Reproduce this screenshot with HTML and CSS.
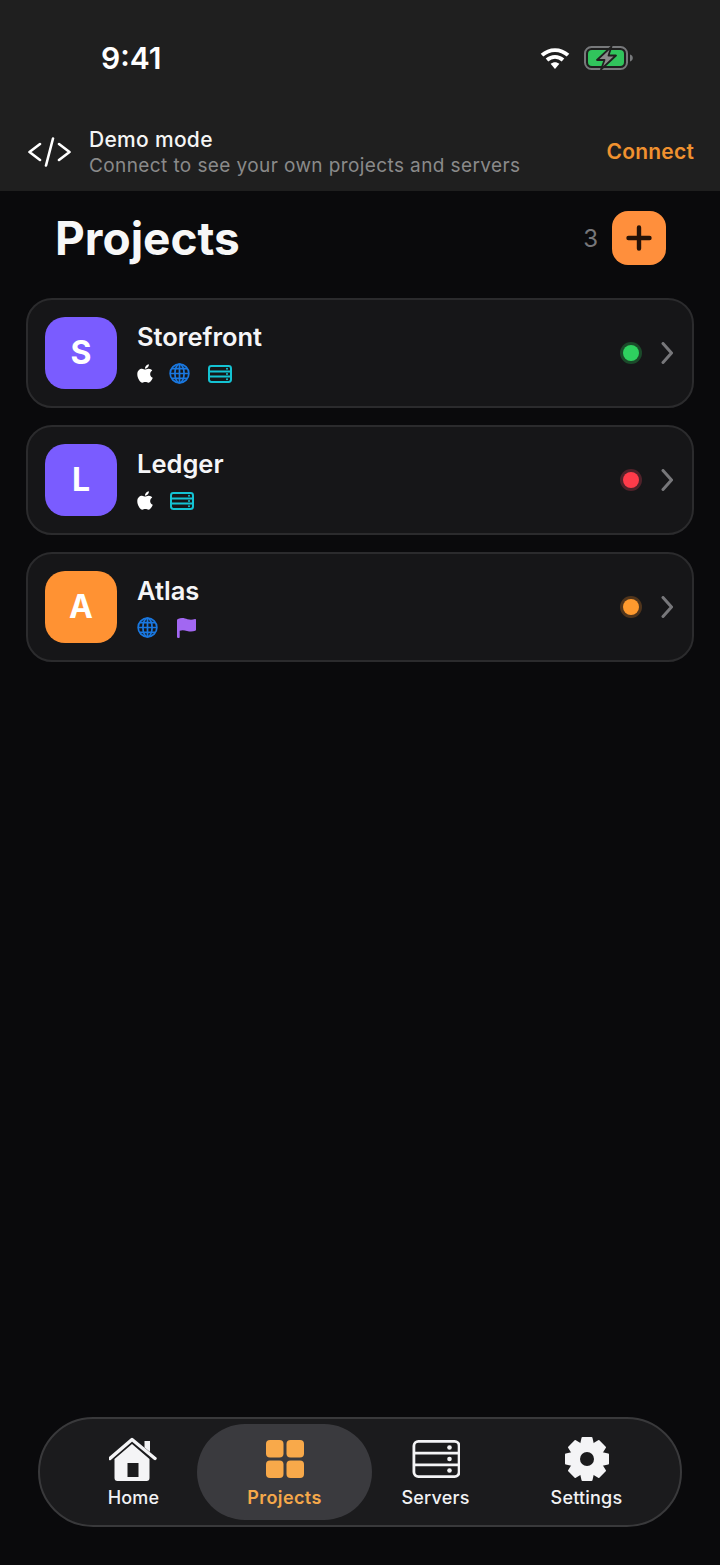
FILE: index.html
```html
<!DOCTYPE html>
<html lang="en">
<head>
    <meta charset="UTF-8">
    <meta name="viewport" content="width=device-width, initial-scale=1.0">
    <title>Projects</title>
    <link rel="stylesheet" href="styles.css">
</head>
<body>
    <svg class="defs" width="0" height="0" aria-hidden="true">
        <symbol id="i-apple" viewBox="0 0 384 512">
            <path fill="currentColor" d="M318.7 268.7c-.2-36.7 16.4-64.4 50-84.8-18.8-26.9-47.2-41.7-84.7-44.6-35.5-2.8-74.3 20.7-88.5 20.7-15 0-49.4-19.7-76.4-19.7C63.3 141.2 4 184.8 4 273.5q0 39.3 14.4 81.2c12.8 36.7 59 126.7 107.2 125.2 25.2-.6 43-17.9 75.8-17.9 31.8 0 48.3 17.9 76.4 17.9 48.6-.7 90.4-82.5 102.6-119.3-65.2-30.7-61.7-90-61.7-91.9zm-56.6-164.2c27.3-32.4 24.8-61.9 24-72.5-24.1 1.4-52 16.4-67.9 34.9-17.5 19.8-27.8 44.3-25.6 71.9 26.1 2 49.9-11.4 69.5-34.3z"/>
        </symbol>
        <symbol id="i-globe" viewBox="0 0 22 22">
            <g fill="none" stroke="currentColor" stroke-width="1.8">
                <circle cx="11" cy="11" r="9.8"/>
                <ellipse cx="11" cy="11" rx="4.8" ry="9.8"/>
                <path d="M11 1.200v19.600M1.200 11h19.600M2.800 6h16.400M2.800 16h16.400"/>
            </g>
        </symbol>
        <symbol id="i-server" viewBox="0 0 24 18">
            <g fill="none" stroke="currentColor" stroke-width="2">
                <rect x="1" y="1" width="22" height="16" rx="2.400"/>
                <path d="M1 6.500h22M1 11.500h22"/>
            </g>
            <g fill="currentColor">
                <circle cx="19" cy="3.800" r="1"/>
                <circle cx="19" cy="9" r="1"/>
                <circle cx="19" cy="14.200" r="1"/>
            </g>
        </symbol>
        <symbol id="i-flag" viewBox="0 0 19 20">
            <path fill="currentColor" d="M0 2.200C0 1.600.3 1.300.9 1 5-.9 8 .5 10.500 1.200c2.500.7 5 .7 7.500-.2.600-.2 1 .1 1 .7v10c0 .5-.2.800-.7 1-2.800 1.100-5.500 1-8.300.2-2.500-.7-4.700-1.200-7.300-.2V19c0 .6-.4 1-1.100 1S0 19.600 0 19z"/>
        </symbol>
    </svg>

    <div class="screen">
        <header class="top">
            <div class="status">
                <span class="time">9:41</span>
                <div class="status-icons">
                    <svg class="wifi" width="30" height="24" viewBox="0 0 30 24">
                        <g fill="none" stroke="#fff" stroke-width="3.800">
                            <path d="M2 9.200C9.500 2.300 20.500 2.300 28 9.200"/>
                            <path d="M7 14c4.700-4.200 11.300-4.200 16 0"/>
                        </g>
                        <path fill="#fff" d="M10.600 17.800c2.700-2.200 6.100-2.200 8.800 0L15 23z"/>
                    </svg>
                    <svg class="battery" width="50" height="24" viewBox="0 0 50 24">
                        <rect x="1" y="1" width="42" height="22" rx="6.500" fill="none" stroke="#77797b" stroke-width="2"/>
                        <rect x="4" y="4" width="36" height="16" rx="4" fill="#31c45c"/>
                        <path d="M46 8.500c1.800.6 2.800 1.900 2.800 3.500s-1 2.900-2.800 3.500z" fill="#77797b"/>
                        <path d="M27.500 .5 13 14h7.500l-3.500 9.500L32 9.500h-7.500z" fill="#8b8b8b" stroke="#1f1f1f" stroke-width="1.800" stroke-linejoin="round"/>
                    </svg>
                </div>
            </div>
            <div class="banner">
                <svg class="code-icon" width="43" height="30" viewBox="0 0 43 30">
                    <path fill="none" stroke="#fff" stroke-width="2.600" stroke-linecap="round" stroke-linejoin="round" d="M12 7 1.500 15 12 23M31 7l10.500 8L31 23M25 1.500 18 28.500"/>
                </svg>
                <div class="banner-text">
                    <div class="banner-title">Demo mode</div>
                    <div class="banner-sub">Connect to see your own projects and servers</div>
                </div>
                <a class="connect">Connect</a>
            </div>
        </header>

        <main class="content">
            <div class="title-row">
                <h1>Projects</h1>
                <span class="count">3</span>
                <button class="add-btn" type="button">
                    <svg width="28" height="28" viewBox="0 0 28 28">
                        <path fill="none" stroke="#241208" stroke-width="4.400" stroke-linecap="round" d="M14 3.500v21M3.500 14h21"/>
                    </svg>
                </button>
            </div>

            <div class="card">
                <div class="avatar purple">S</div>
                <div class="card-body">
                    <div class="card-name">Storefront</div>
                    <div class="card-icons">
                        <svg class="ic ic-apple"><use href="#i-apple"/></svg>
                        <svg class="ic ic-globe"><use href="#i-globe"/></svg>
                        <svg class="ic ic-server"><use href="#i-server"/></svg>
                    </div>
                </div>
                <span class="dot green"></span>
                <svg class="chevron" width="12" height="22" viewBox="0 0 12 22"><path d="M2 1.500 10.500 11 2 20.500"/></svg>
            </div>

            <div class="card">
                <div class="avatar purple">L</div>
                <div class="card-body">
                    <div class="card-name">Ledger</div>
                    <div class="card-icons">
                        <svg class="ic ic-apple"><use href="#i-apple"/></svg>
                        <svg class="ic ic-server"><use href="#i-server"/></svg>
                    </div>
                </div>
                <span class="dot red"></span>
                <svg class="chevron" width="12" height="22" viewBox="0 0 12 22"><path d="M2 1.500 10.500 11 2 20.500"/></svg>
            </div>

            <div class="card">
                <div class="avatar orange">A</div>
                <div class="card-body">
                    <div class="card-name">Atlas</div>
                    <div class="card-icons">
                        <svg class="ic ic-globe"><use href="#i-globe"/></svg>
                        <svg class="ic ic-flag"><use href="#i-flag"/></svg>
                    </div>
                </div>
                <span class="dot amber"></span>
                <svg class="chevron" width="12" height="22" viewBox="0 0 12 22"><path d="M2 1.500 10.500 11 2 20.500"/></svg>
            </div>
        </main>

        <nav class="tabbar">
            <a class="tab">
                <svg class="tab-icon" width="50" height="44" viewBox="1.500 0 50 44">
                    <path fill="none" stroke="#f4f4f6" stroke-width="3.400" stroke-linecap="round" stroke-linejoin="round" d="M2.500 21.500 24.500 2.500l23 19"/>
                    <path fill="#f4f4f6" d="M37 4h5.500v11L37 10.500z"/>
                    <path fill="#f4f4f6" fill-rule="evenodd" d="M24.500 7 42 22V41c0 1.700-1 3-3 3H10c-2 0-3-1.300-3-3V22zM20 26v14h11V26z"/>
                </svg>
                <span>Home</span>
            </a>
            <a class="tab active">
                <svg class="tab-icon" width="38" height="44" viewBox="0 0 38 44">
                    <g fill="#f8a94a">
                        <rect x="0" y="3" width="17.500" height="17.500" rx="4"/>
                        <rect x="20.500" y="3" width="17.500" height="17.500" rx="4"/>
                        <rect x="0" y="23.500" width="17.500" height="17.500" rx="4"/>
                        <rect x="20.500" y="23.500" width="17.500" height="17.500" rx="4"/>
                    </g>
                </svg>
                <span>Projects</span>
            </a>
            <a class="tab">
                <svg class="tab-icon" width="48" height="44" viewBox="-.5 0 48 44">
                    <g fill="none" stroke="#f4f4f6" stroke-width="2.800">
                        <rect x="1.400" y="4.400" width="45.200" height="35.200" rx="4.500"/>
                        <path d="M1.400 16.200h45.200M1.400 27.800h45.200"/>
                    </g>
                    <g fill="#f4f4f6">
                        <circle cx="37" cy="10.500" r="2.300"/>
                        <circle cx="37" cy="22" r="2.300"/>
                        <circle cx="37" cy="33.500" r="2.300"/>
                    </g>
                </svg>
                <span>Servers</span>
            </a>
            <a class="tab">
                <svg class="tab-icon" width="44" height="44" viewBox="0 0 44 44">
                    <g fill="#f4f4f6" stroke="#f4f4f6" stroke-width="2" stroke-linejoin="round">
                        <path d="M17.500 1h9l2 9h-13z"/>
                        <path d="M17.500 1h9l2 9h-13z" transform="rotate(45 22 22)"/>
                        <path d="M17.500 1h9l2 9h-13z" transform="rotate(90 22 22)"/>
                        <path d="M17.500 1h9l2 9h-13z" transform="rotate(135 22 22)"/>
                        <path d="M17.500 1h9l2 9h-13z" transform="rotate(180 22 22)"/>
                        <path d="M17.500 1h9l2 9h-13z" transform="rotate(225 22 22)"/>
                        <path d="M17.500 1h9l2 9h-13z" transform="rotate(270 22 22)"/>
                        <path d="M17.500 1h9l2 9h-13z" transform="rotate(315 22 22)"/>
                        <circle cx="22" cy="22" r="15.500"/>
                    </g>
                    <circle cx="22" cy="22" r="7" fill="#1b1b1d"/>
                </svg>
                <span>Settings</span>
            </a>
        </nav>
    </div>
</body>
</html>
```

FILE: styles.css
```css
* { box-sizing: border-box; }
html, body { margin: 0; height: 100%; overflow: hidden; }
body { background-color: #0a0a0c; color: #f5f5f7; font-family: Inter, "Noto Sans", sans-serif; }
.defs { position: absolute; }
.screen { height: 1565px; display: flex; flex-direction: column; }

.top { background-color: #1f1f1f; height: 191px; }
.status { height: 116px; display: flex; align-items: center; justify-content: space-between; padding: 0 86px 0 101px; }
.time { font-size: 30px; font-weight: 600; color: #fff; }
.status-icons { display: flex; align-items: center; gap: 14px; }
.status-icons svg { display: block; }
.banner { display: flex; align-items: center; height: 75px; padding: 0 26px 2px 28px; }
.code-icon { flex: none; margin: 0 18px 2px 0; }
.banner-text { flex: 1; }
.banner-title { font-size: 21px; font-weight: 500; line-height: 26px; letter-spacing: 0.3px; color: #f5f5f5; }
.banner-sub { font-size: 19px; line-height: 26px; letter-spacing: 0.4px; color: #8a8a8a; }
.connect { font-size: 21px; font-weight: 600; letter-spacing: 0.2px; padding-bottom: 2px; color: #f0912f; }

.content { padding: 0 26px; }
.title-row { display: flex; align-items: center; padding: 20px 28px 33px 29px; }
h1 { flex: 1; margin: 0; font-size: 46px; font-weight: 700; line-height: 54px; color: #f7f7f7; }
.count { font-size: 24px; color: #77777a; margin-right: 14px; }
.add-btn { width: 54px; height: 54px; border: none; border-radius: 16px; padding: 0; background-color: #ff8f3c; display: flex; align-items: center; justify-content: center; }

.card { display: flex; align-items: center; height: 110px; margin-bottom: 17px; padding: 0 19px 0 17px; background-color: #161618; border: 2px solid #2b2b2d; border-radius: 26px; }
.avatar { width: 72px; height: 72px; padding-bottom: 2px; border-radius: 20px; flex: none; display: flex; align-items: center; justify-content: center; font-size: 32px; font-weight: 700; color: #fff; }
.avatar.purple { background-color: #7a5cff; }
.avatar.orange { background-color: #ff9233; }
.card-body { flex: 1; margin-left: 20px; }
.card-name { font-size: 25.5px; font-weight: 600; line-height: 32px; color: #f5f5f7; }
.card-icons { display: flex; align-items: center; gap: 16px; margin-top: 9px; height: 24px; }
.ic { display: block; }
.ic-apple { width: 16px; height: 21px; color: #fff; }
.ic-globe { width: 21px; height: 21px; margin-right: 1px; color: #1a78e0; }
.ic-server { width: 24px; height: 18px; color: #14c3d3; margin-left: 1px; }
.ic-flag { width: 19px; height: 20px; color: #a267f2; margin-left: 2px; }
.dot { width: 16px; height: 16px; border-radius: 50%; margin-right: 22px; }
.dot.green { background-color: #2ed15f; box-shadow: 0 0 0 3px #1b4a2a; }
.dot.red { background-color: #ff3b4a; box-shadow: 0 0 0 3px #50222a; }
.dot.amber { background-color: #ff9a2e; box-shadow: 0 0 0 3px #50351c; }
.chevron { flex: none; }
.chevron path { fill: none; stroke: #77777a; stroke-width: 3; stroke-linecap: round; stroke-linejoin: round; }

.tabbar { margin: auto 38px 38px; height: 110px; padding: 5px 18px; display: grid; grid-template-columns: repeat(4, 151px); justify-content: center; background-color: #1b1b1d; border: 2px solid #39393b; border-radius: 55px; }
.tab { display: flex; flex-direction: column; align-items: center; padding-top: 13px; border-radius: 48px; font-size: 18px; font-weight: 500; line-height: 22px; letter-spacing: 0.2px; color: #f2f2f4; }
.tab-icon { display: block; margin-bottom: 6px; }
.tab.active { margin: 0 -12px; background-color: #3a3a3e; letter-spacing: 0.4px; font-weight: 600; color: #f5a84a; }
```
